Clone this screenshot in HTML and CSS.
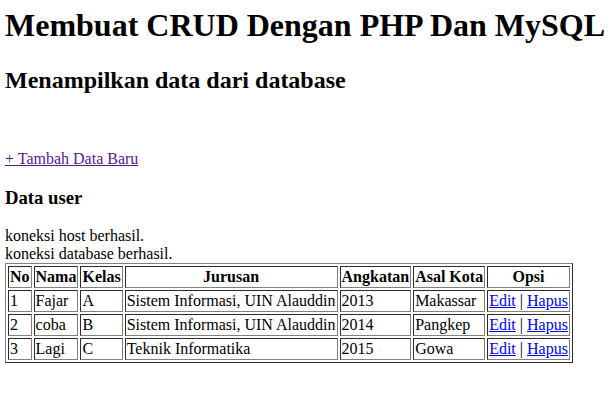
FILE: index.html
```html
<!DOCTYPE html>
<html>
<head>
<meta charset="utf-8">
<title>CRUD</title>
<link rel="stylesheet" href="styles.css">
</head>
<body class="page">
<h1 class="title">Membuat CRUD Dengan PHP Dan MySQL</h1>
<h2 class="subtitle">Menampilkan data dari database</h2>
<br/>
<br/>
<a class="add-link" href="#">+ Tambah Data Baru</a>
<h3 class="section">Data user</h3>
<div class="status">koneksi host berhasil.<br>koneksi database berhasil.</div>
<table class="data">
<tr>
<th>No</th><th>Nama</th><th>Kelas</th><th>Jurusan</th><th>Angkatan</th><th>Asal Kota</th><th>Opsi</th>
</tr>
<tr>
<td>1</td><td>Fajar</td><td>A</td><td>Sistem Informasi, UIN Alauddin</td><td>2013</td><td>Makassar</td><td><a class="act" href="#">Edit</a> | <a class="act" href="#">Hapus</a></td>
</tr>
<tr>
<td>2</td><td>coba</td><td>B</td><td>Sistem Informasi, UIN Alauddin</td><td>2014</td><td>Pangkep</td><td><a class="act" href="#">Edit</a> | <a class="act" href="#">Hapus</a></td>
</tr>
<tr>
<td>3</td><td>Lagi</td><td>C</td><td>Teknik Informatika</td><td>2015</td><td>Gowa</td><td><a class="act" href="#">Edit</a> | <a class="act" href="#">Hapus</a></td>
</tr>
</table>
</body>
</html>
```
FILE: styles.css
```css
html { background: #fff; }
.page {
  margin: 0 0 8px 5px;
  font-family: "Liberation Serif", "Times New Roman", serif;
  font-size: 16px;
  color: #000;
}
.title {
  font-size: 32px;
  margin: 6.5px 0 23.5px;
  font-weight: bold;
  white-space: nowrap;
}
.subtitle { font-size: 24px; margin: 19.92px 0; font-weight: bold; }
.section { font-size: 18.72px; margin: 18.72px 0; font-weight: bold; }
.add-link { color: #551a8b; text-decoration: underline; }
.act { color: #0000ee; text-decoration: underline; }
.data {
  border: 1px outset #808080;
  border-spacing: 2px;
  border-collapse: separate;
}
.data th, .data td {
  border: 1px inset #808080;
  padding: 1px;
  text-align: left;
}
.data th { text-align: center; font-weight: bold; }
```
